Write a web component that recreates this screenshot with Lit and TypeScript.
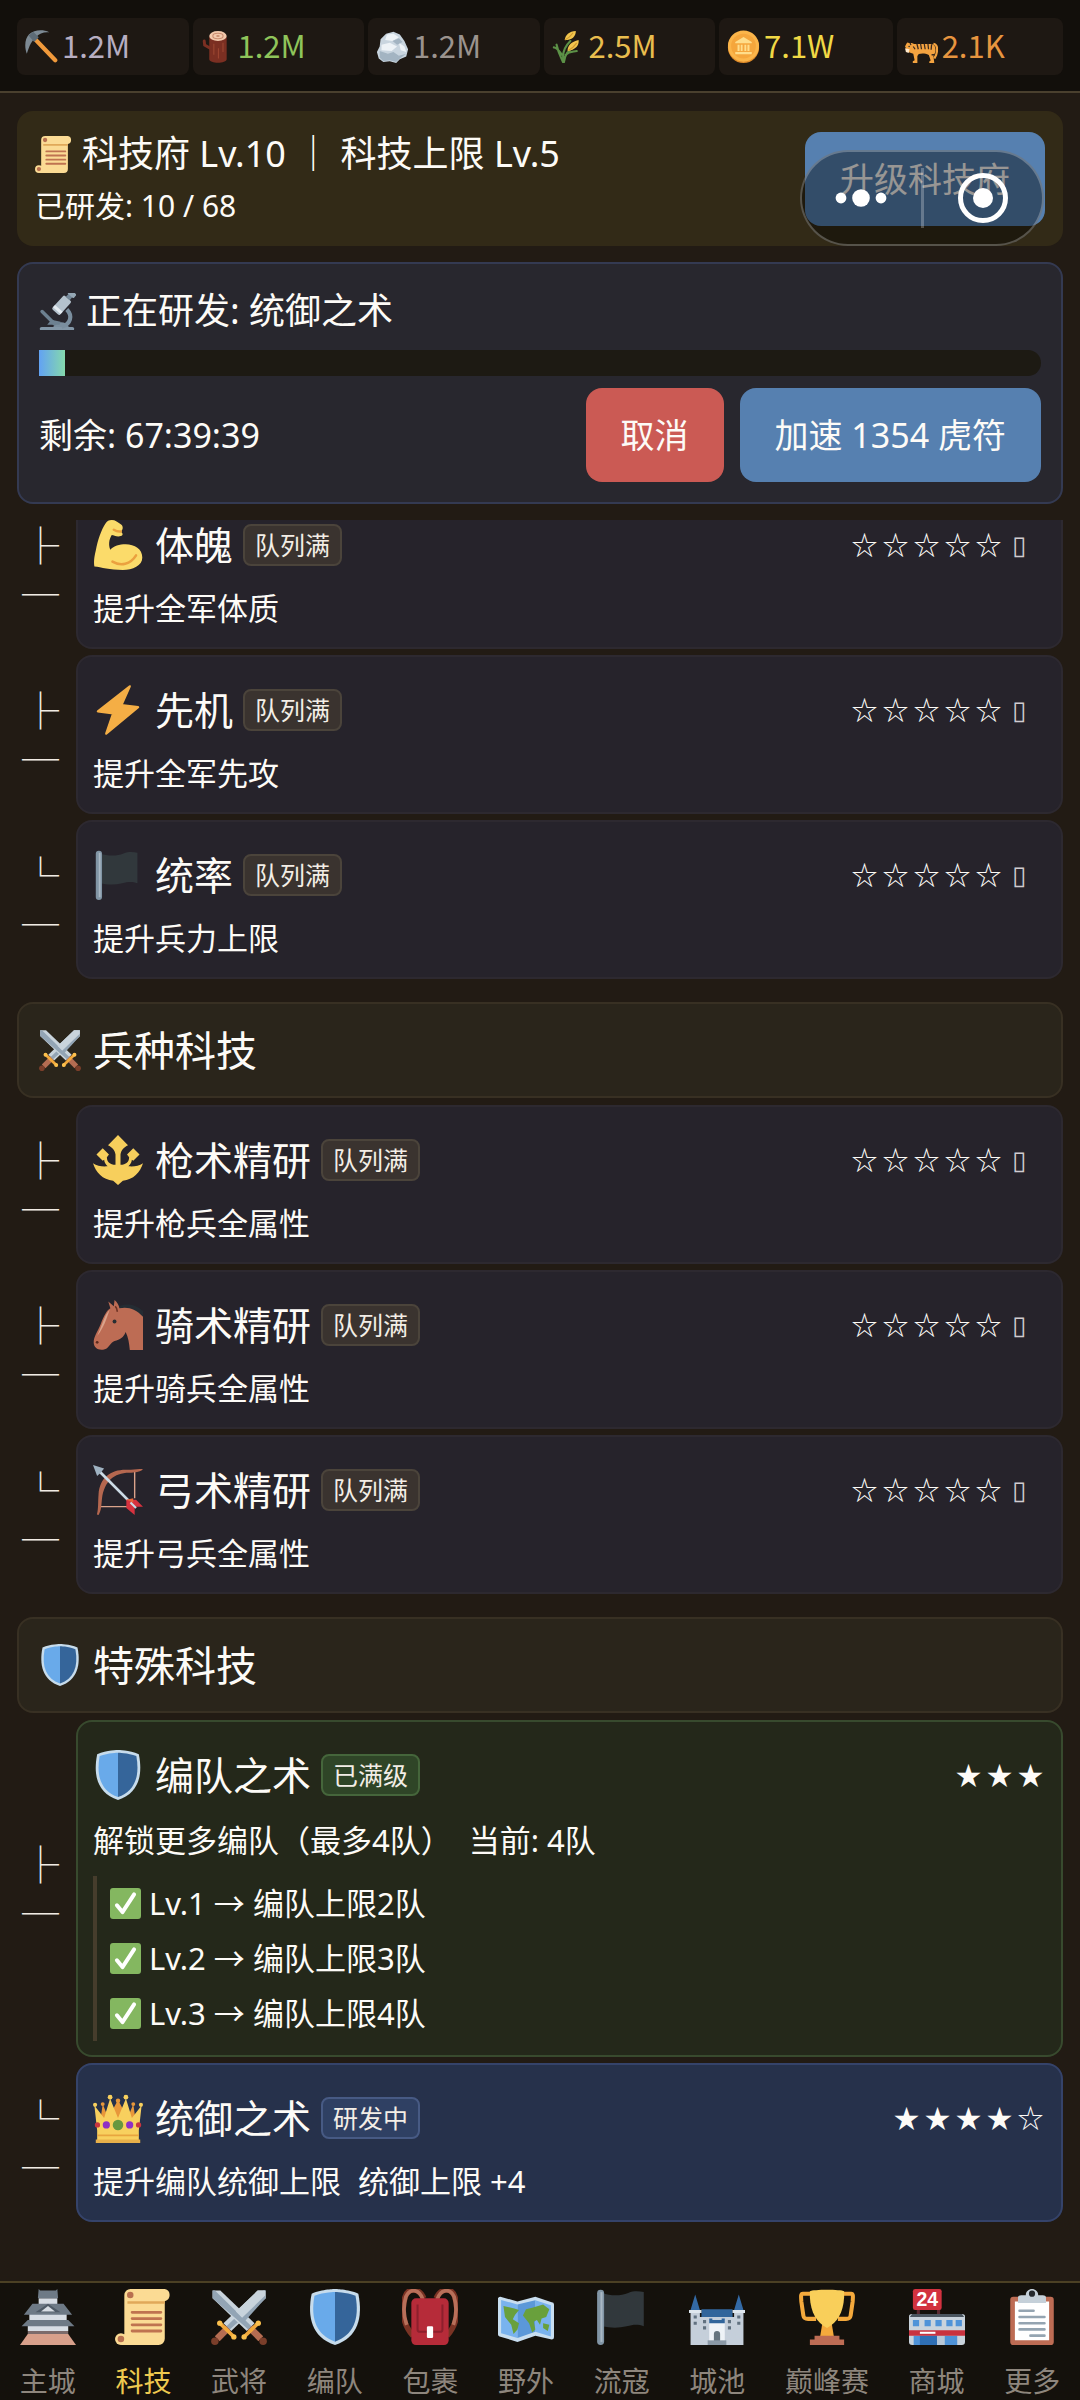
import { LitElement, html, svg, css, nothing } from "lit";
import type { SVGTemplateResult } from "lit";
import { customElement, query, state } from "lit/decorators.js";
import { classMap } from "lit/directives/class-map.js";

/* Icon drawings, each on a 36 by 36 grid. */
const sword = svg`
  <path d="M1 1h5L28 22l-5 5L1 6z" fill="#c9d4dc"/>
  <path d="M1 1h1.500L26 24l-2 2L1 6z" fill="#93a5b5"/>
  <path d="M25 25l7 7" stroke="#b56d52" stroke-width="4.400"/>
  <circle cx="33.500" cy="33.600" r="2.400" fill="#7a3e2a"/>
  <path d="M21 31L30.500 21.800" stroke="#f2a93c" stroke-width="2.400" stroke-linecap="round"/>
  <circle cx="21.300" cy="30.800" r="1.700" fill="#fbc04d"/>
  <circle cx="30.400" cy="22" r="1.700" fill="#fbc04d"/>`;

const icons: Record<string, SVGTemplateResult> = {
  pick: svg`
    <path d="M9 8l24 25" stroke="#f0993b" stroke-width="4.600" stroke-linecap="round"/>
    <path d="M4.500 4.500C10 0 19 -1 26.500 2.500c-6-.5-11 1-14.500 5.500-5 4-7 9-10 18C-1 18 0 9 4.500 4.500z" fill="#7d8a94"/>
    <path d="M4 6l5-4 6 6-5 5z" fill="#5d6b76"/>`,
  wood: svg`
    <path d="M9 7v25c0 5 19 5 19 0V7z" fill="#7b2f22"/>
    <path d="M10 20L4 16.500l-.5-4.500" stroke="#7b2f22" stroke-width="3.200" fill="none" stroke-linecap="round"/>
    <path d="M14 15v12M19 20v11M24 14v10" stroke="#9c4631" stroke-width="1.200"/>
    <ellipse cx="18.500" cy="6.500" rx="9.500" ry="5.500" fill="#f2c9ac"/>
    <ellipse cx="18.500" cy="6.500" rx="5.600" ry="3" fill="none" stroke="#c98d70" stroke-width="1.200"/>
    <ellipse cx="18.500" cy="6.500" rx="2" ry="1" fill="#c98d70"/>`,
  rock: svg`
    <path d="M11 4l8-2 7 3 5 7 4 9-2 8-7 3-4 4-7-2-7 1-5-4-2-7 3-6 1-8z" fill="#c9d5df"/>
    <path d="M12 5l7-1 6 4-7 4-8-1zM6 16l9-2 8 4-6 5-11-1zM25 14l6 4 2 6-6-2z" fill="#eef3f7"/>
    <path d="M4 23l9 3 6-2 6 4 8-2-7 5-4 4-7-2-7 1-4-4zM18 12l7-3 4 4-6 3z" fill="#a3b4c2"/>`,
  rice: svg`
    <path d="M13 35C11 28 12 20 20 12M13 35C14 27 17 22 26 17M12 35C9 28 7 25 5 16M11 27C7 22 5 19 2 19M15 27c4-4 8-3 12-4" fill="none" stroke="#5c9147" stroke-width="2.300" stroke-linecap="round"/>
    <path d="M14 11C14 6 19 1 26 1c0 6-4 10-12 10zM17 23c0-6 4-10 12-12 1 6-4 11-12 12z" fill="#f2c54d"/>
    <path d="M14 11c4-2 7-5 9-8M18 22c4-2 7-5 9-8" stroke="#cf9a2f" fill="none" stroke-width="1.300"/>`,
  coin: svg`
    <circle cx="18" cy="19" r="17" fill="#e08c2a"/>
    <circle cx="18" cy="17.500" r="17" fill="#fbb54a"/>
    <circle cx="18" cy="17.500" r="13.500" fill="#f5a63c"/>
    <path d="M18 7.500L27 13v1.500H9V13zM11.500 16h2.200v7h-2.200zM15 16h2v7h-2zM19 16h2v7h-2zM22.300 16h2.200v7h-2.200zM9 24h18v2.500H9z" fill="#ffdd8a"/>`,
  tiger: svg`
    <path d="M31 15c5 1 4.500 7 3 12l-2 4" fill="none" stroke="#f4a340" stroke-width="2.400"/>
    <path d="M0 18l1.500-3 1-1.500 2 .8h3l2.500 1h18c4.500 0 6 4 5 9l-2 4 1 8h-5.500v-2l1.500-1-2-6c-4-2-8-2-11-1l-1.500 2V36H8.500v-2l2-1-1.500-7-5.500-2z" fill="#f4a340"/>
    <path d="M0 20l5 1-1 4-3-1z" fill="#ffe8c9"/>
    <path d="M13 15l1.500 6M17 15l1 6M21 15l1 6M25 15l.7 6M29 15.500l-.5 6M5.500 14l1 2.500M9 18l2 3M29 27h3" stroke="#3a2a20" stroke-width="1.400"/>
    <circle cx="4.500" cy="18" r="0.900" fill="#292f33"/>`,
  scroll: svg`
    <path d="M10 0h22a4 4 0 0 1 0 7.800v24.200a4 4 0 0 1-4 4H4V32l2-3V4a4 4 0 0 1 4-4z" fill="#fbdb94"/>
    <path d="M8 7.800h24v1.700H8z" fill="#e0a95a"/>
    <circle cx="9.800" cy="3.900" r="2.100" fill="#b8704f"/>
    <circle cx="3.800" cy="32.200" r="3.800" fill="#fbdb94"/>
    <circle cx="3.800" cy="32.200" r="2.100" fill="#b8704f"/>
    <path d="M11 15h18.500M11 19h18.500M11 23h18.500M11 27h18.500" stroke="#bf7350" stroke-width="1.800" stroke-linecap="round"/>`,
  scope: svg`
    <path d="M3 33h29a2 2 0 0 1 2 3H1a2 2 0 0 1 2-3z" fill="#8296a6"/>
    <path d="M27 16c6 6 4 14-5 17" fill="none" stroke="#7a8e9e" stroke-width="4"/>
    <path d="M14 33c1-5 12-7 15 0z" fill="#7a8e9e"/>
    <path d="M3 18l12 12" stroke="#6d8191" stroke-width="3.400" stroke-linecap="round"/>
    <path d="M12 26l9 2-1 3H8z" fill="#6d8191"/>
    <g transform="rotate(42 22 12)">
      <rect x="17" y="3" width="10" height="18" rx="1.500" fill="#b4c2cd"/>
      <path d="M17 16h10v3H17z" fill="#e4ebf0"/>
      <rect x="19.500" y="-1" width="5" height="4" fill="#75899a"/>
      <rect x="18" y="-5.500" width="8" height="5" rx="1.500" fill="#94a7b5"/>
    </g>`,
  biceps: svg`
    <path d="M13.500 0C16 0 18 1.500 20.500 3.500c1.500 1.500 1 4-.5 4.800 1.500 1.200 2 2.700 0 3.300-3 .7-5-.7-6.500-.8C11.500 14 11 18 12.500 21.500 15 18.500 19 17.500 23.500 17.500 30 17.500 35.500 21 35.500 27c0 6-7 9-14 9C12 36 6 34 1 33.500.5 30 .8 27 2 22 3.500 14 6 7 9 2.500 10 .8 11.500 0 13.500 0z" fill="#fbdb6a"/>
    <path d="M14 30c6 3.500 13 2 17-4.500M15 7c1.500 1 3.500 1.500 5 1.300" fill="none" stroke="#eba13f" stroke-width="1.800" stroke-linecap="round"/>`,
  zap: svg`<path d="M26.500 1L3.500 19l11 1.500L9.500 35 32.500 16 20.500 14.500z" fill="#f4ae45" stroke="#f4ae45" stroke-width="1.600" stroke-linejoin="round"/>`,
  flag: svg`
    <path d="M5 2.500c6 2 12 2 17 0 4-1.500 7-1 10-.5v22c-4-1.500-7-1-11 0-5 1.200-10 1.200-16 0z" fill="#31383c"/>
    <rect x="2" y="0.500" width="4.500" height="35.500" rx="2.200" fill="#8195a5"/>
    <path d="M4.800 2v32" stroke="#a9b8c4" stroke-width="1.300"/>`,
  swords: svg`<g transform="matrix(-1 0 0 1 36 0)">${sword}</g><g>${sword}</g><path d="M35 1h-5L16 14.500l5 5L35 6z" fill="#c9d4dc"/><path d="M35 4L18.500 20l2.500 1.500L35 6z" fill="#93a5b5"/>`,
  trident: svg`
    <path d="M18 0l7.200 7.300c-3 1.600-5 3.500-5.400 6.700v7.500c4-.3 6.200-2 6.200-5.500l-1.500-2L29 9.500l4.500 4.500-4.500 4.500-1-.6c-.3 2-1 3.300-2.500 4.600 4 .4 7.500-.3 10.500-2.200C34 27 29 32 21.500 33L18 36l-3.500-3C7 32 2 27 0 20.300c3 1.900 6.500 2.600 10.500 2.200C9 21.200 8.300 19.900 8 17.900l-1 .6L2.500 14 7 9.500l4.500 4.500-1.500 2c0 3.500 2.200 5.200 6.200 5.500V14c-.4-3.200-2.400-5.100-5.400-6.700z" fill="#f7cf5c"/>`,
  horse: svg`
    <path d="M18 5c3-2.500 12-3 18 3v8H24z" fill="#252c33"/>
    <path d="M11 1l4 3.500L15.500 0c2 1.500 3 3.500 3.500 6 6-1.500 12 .5 17 6v24h-9.500c-.5-5-1-9-3-13-1.500 4-4 5.500-8 6.500-3 1-4 5-7 6-4 1.200-8-.5-8-5 0-4 3-8 5-13C8 11 10 7.500 12.500 6z" fill="#bd6c54"/>
    <path d="M12 7C9 10 8 14 5.500 20L3 26c3-4 5-8 6.500-12z" fill="#dba38b"/>
    <path d="M16 4.500c1 1 1.500 2.500 1.500 4" stroke="#6b3022" stroke-width="1.200" fill="none"/>
    <circle cx="15.500" cy="15.500" r="1.400" fill="#292f33"/><circle cx="3" cy="30.500" r="1" fill="#5c2a1e"/>`,
  bow: svg`
    <path d="M30 4v20M4 30h22" stroke="#dba38b" stroke-width="1"/>
    <path d="M36 3c-2 2-6 2.500-10 2.500C15 5.500 8 12 6.500 24c-.5 5-.5 9-2.500 12l-1.200-.3C4 31 3.500 27 4 21 5 9 13 3 25 3.500 29 3.500 32 2.500 36 3z" fill="#b5674f"/>
    <path d="M4 4l24 24" stroke="#ccdbe6" stroke-width="2"/>
    <path d="M0 0l8 2.500-2.500 3L3 8z" fill="#9fb2c2"/>
    <path d="M24 25l7 0 5 5h-6v6l-6-5z" fill="#d7323f"/>
    <path d="M24 25l5-1v3z" fill="#e8663a"/><path d="M27 27l4 4" stroke="#ccdbe6" stroke-width="1.500"/>`,
  shield: svg`
    <path d="M33 3c-7-3-15-3-15-3S10 0 3 3C0 18 3 31 18 36c15-5 18-18 15-33z" fill="#c7dcec"/>
    <path d="M18 33.900C6.400 29.700 2 19.800 4.800 4.400 11 2 18 2 18 2z" fill="#69aaea"/>
    <path d="M18 33.900C29.600 29.700 34 19.800 31.200 4.400 25 2 18 2 18 2z" fill="#35659a"/>`,
  check: svg`
    <rect width="36" height="36" rx="3.500" fill="#84b760"/>
    <path d="M8 20l6.500 8L28 7.500" fill="none" stroke="#fff" stroke-width="4.600" stroke-linecap="round" stroke-linejoin="round"/>`,
  crown: svg`
    <path d="M5 22L7 8l4 10 7-13 7 13 4-10 2 14z" fill="#e8973a"/>
    <path d="M3 35V27L1 9l7 9 4.300-14L18 18l5.700-14L28 18l7-9-2 18v8z" fill="#f8d05e"/>
    <path d="M3 30.500h30" stroke="#e8a53f" stroke-width="1.300"/>
    <path d="M2 33.500h32V36H2z" fill="#e8b04a"/>
    <circle cx="12.300" cy="3" r="1.700" fill="#f8d05e"/><circle cx="23.700" cy="3" r="1.700" fill="#f8d05e"/>
    <circle cx="1.500" cy="8.500" r="1.500" fill="#f8d05e"/><circle cx="34.500" cy="8.500" r="1.500" fill="#f8d05e"/>
    <circle cx="18" cy="5.500" r="1.600" fill="#e8973a"/><circle cx="7" cy="8" r="1.400" fill="#e8973a"/><circle cx="29" cy="8" r="1.400" fill="#e8973a"/>
    <circle cx="18" cy="23" r="3.800" fill="#67973f"/><circle cx="9.600" cy="23" r="2.600" fill="#8f2fc4"/><circle cx="26.400" cy="23" r="2.600" fill="#8f2fc4"/>
    <circle cx="3.200" cy="23" r="1.900" fill="#c9363f"/><circle cx="32.800" cy="23" r="1.900" fill="#c9363f"/>`,
  keep: svg`
    <path d="M5 29h26l5 7H0z" fill="#d8a08b"/><path d="M5 27h26v2H5z" fill="#7c6b6b"/>
    <path d="M6 16h24v4H6zM5 23.500h26V27H5zM12 6h12v5H12z" fill="#d7dde4"/>
    <path d="M12 0l1 1h10l1-1 .5 6h-13zM8 9.500h20l5.500 7H2.500zM5 20h26l4 4H1z" fill="#6e7a86"/>
    <path d="M18 9.500l8 5.500H10z" fill="#4f5b67"/><path d="M18 11l4.500 3.500h-9z" fill="#d7dde4"/>`,
  bag: svg`
    <path d="M14 6C11-1 4-1 2 5-.5 14 0 22 7 30M22 6c3-7 10-7 12-1 2.500 9 2 17-5 25" fill="none" stroke="#7a3324" stroke-width="3.600"/>
    <path d="M13.500 7C11-.5 5-.5 2.500 5 1 10 .5 16 3 23M22.500 7c2.500-7.500 8.500-7.500 11-2 1.500 5 2 11-.5 18" fill="none" stroke="#b8705a" stroke-width="2.400"/>
    <path d="M9 6h18a3 3 0 0 1 3 3v24a3 3 0 0 1-3 3H9a3 3 0 0 1-3-3V9a3 3 0 0 1 3-3z" fill="#b62b39"/>
    <path d="M10 10v16a1.500 1.500 0 0 0 1.500 1.500h13A1.500 1.500 0 0 0 26 26V10" fill="none" stroke="#8d1f2d" stroke-width="1.300"/>
    <rect x="16" y="24" width="4" height="7.500" rx="0.800" fill="#fff"/>`,
  map: svg`
    <path d="M1.500 5L12.500 8 24 5l10.500 3.500a1.500 1.500 0 0 1 1.500 1.500v21a1.500 1.500 0 0 1-1.500 1.500L24 30l-11.500 4L1 30.500A1.500 1.500 0 0 1 0 29V6a1.500 1.500 0 0 1 1.500-1z" fill="#c8def0"/>
    <path d="M2 7l10.500 3v21.500L2 28.500zM24 7.200L34 10.500v20L24 27.500z" fill="#79b3ef"/>
    <path d="M12.500 10L24 7.200v20.300l-11.500 4z" fill="#5b98d9"/>
    <path d="M3.500 11l7 1.500 3 1-2.500 3-1.500 3 4 2.500-1 4-2.500 3-1.500-6-4-5zM16 17l2-4 4-1 7-2 4 3-2 5-3 1-1 4-2-3-2 1 1 5-2 2-2-6zM29 22l4 1-1 4-3-2z" fill="#69a03c"/>`,
  castle: svg`
    <path d="M8 13h20v6H8z" fill="#31659b"/>
    <path d="M1 14h6v22H1zM29 14h6v22h-6zM7 18h22v18H7z" fill="#c5cfda"/>
    <path d="M0 13.500h8v2H0zM28 13.500h8v2h-8z" fill="#dfe7ee"/>
    <path d="M4 3.500l3 10H1zM32 3.500l3 10h-6z" fill="#336aa6"/>
    <path d="M13 20h10v14H13z" fill="#eef3f7"/><path d="M13 19h2v1h6v-1h2v3H13z" fill="#31659b"/>
    <path d="M16 34v-5a2 2 0 0 1 4 0v5z" fill="#66757f"/><path d="M12 33h12v3H12z" fill="#8b99a6"/>
    <path d="M3 17h2v2H3zM3 21h2v2H3zM31 17h2v2h-2zM31 21h2v2h-2zM9 20h2v2H9zM9 24h2v2H9zM25 20h2v2h-2zM25 24h2v2h-2z" fill="#617180"/>`,
  cup: svg`
    <path d="M8 3H2.500C1 3 1.300 5 1.500 8l1.300 9c.3 2 1.200 2.200 3 2.200H11M28 3h5.500c1.500 0 1.200 2 1 5l-1.300 9c-.3 2-1.200 2.200-3 2.200H25" fill="none" stroke="#f4a93c" stroke-width="2.600"/>
    <path d="M15 22h6l1.500 9h-9z" fill="#f4a93c"/>
    <path d="M7 1.500C9 .2 27 .2 29 1.500 29.500 12 26 20 20.500 23.500L18 25l-2.500-1.500C10 20 6.500 12 7 1.500z" fill="#f9cf5a"/>
    <path d="M10 30h16v2.500h3V36H7v-3.500h3z" fill="#bd6c54"/>`,
  shop: svg`
    <path d="M6 12v5M19 12v5" stroke="#5b2a32" stroke-width="2"/>
    <rect x="2.500" y="0" width="18.500" height="13.500" rx="1.500" fill="#d2323f"/>
    <path d="M0 17.500C0 16.500 1 16 2 16h32c1 0 2 .5 2 1.500V34c0 1-.7 2-2 2H2c-1.300 0-2-1-2-2z" fill="#c9d3dc"/>
    <path d="M2 16h32l1.500 2H.5z" fill="#4a555f"/>
    <path d="M2.500 20h4v4h-4zM10 20h4v4h-4zM17 20h4v4h-4zM24 20h4v4h-4zM30 20h4v4h-4zM3 30h28v6H3z" fill="#4f93d8"/>
    <path d="M7 30h11v6H7z" fill="#2f6fb5"/><path d="M18 30h5v6h-5z" fill="#b8c8d8"/>
    <path d="M0 26.500h36v3.500H0z" fill="#c9323f"/><path d="M7 27.500h10v1.300H7z" fill="#fff"/>
    <text x="11.800" y="11.200" text-anchor="middle" font-family="Liberation Sans, sans-serif" font-weight="700" font-size="12.500" fill="#fff">24</text>`,
  board: svg`
    <rect x="4" y="5" width="28" height="31" rx="2" fill="#bd6c54"/>
    <path d="M7 8h22v25H7z" fill="#fff"/>
    <path d="M9 9V5.500C9 4.500 10 4 11 4h3c0-2.500 2-4 4-4s4 1.500 4 4h3c1 0 2 .5 2 1.500V9z" fill="#c5d0d9"/>
    <circle cx="18" cy="3" r="2" fill="#25292d"/>
    <path d="M10 14h9M10 18h16M10 22h16M10 26h16M17 30h9" stroke="#94a4b1" stroke-width="1.700" stroke-linecap="round"/>`,
};

interface Tech {
  icon: string;
  name: string;
  desc: string;
  effect?: string;
  badge: string;
  kind: "wait" | "done" | "busy";
  stars: string;
  more?: boolean;
  levels?: string[];
}

interface Group {
  icon?: string;
  title?: string;
  techs: Tech[];
}

const queued = (icon: string, name: string, desc: string): Tech => ({
  icon, name, desc, badge: "队列满", kind: "wait", stars: "☆☆☆☆☆", more: true,
});

const groups: Group[] = [
  {
    techs: [
      queued("biceps", "体魄", "提升全军体质"),
      queued("zap", "先机", "提升全军先攻"),
      queued("flag", "统率", "提升兵力上限"),
    ],
  },
  {
    icon: "swords",
    title: "兵种科技",
    techs: [
      queued("trident", "枪术精研", "提升枪兵全属性"),
      queued("horse", "骑术精研", "提升骑兵全属性"),
      queued("bow", "弓术精研", "提升弓兵全属性"),
    ],
  },
  {
    icon: "shield",
    title: "特殊科技",
    techs: [
      {
        icon: "shield", name: "编队之术", desc: "解锁更多编队（最多4队）", effect: "当前: 4队",
        badge: "已满级", kind: "done", stars: "★★★",
        levels: ["Lv.1 → 编队上限2队", "Lv.2 → 编队上限3队", "Lv.3 → 编队上限4队"],
      },
      {
        icon: "crown", name: "统御之术", desc: "提升编队统御上限", effect: "统御上限 +4",
        badge: "研发中", kind: "busy", stars: "★★★★☆",
      },
    ],
  },
];

const resources = [
  ["pick", "1.2M", "iron"],
  ["wood", "1.2M", "wood"],
  ["rock", "1.2M", "stone"],
  ["rice", "2.5M", "grain"],
  ["coin", "7.1W", "gold"],
  ["tiger", "2.1K", "token"],
];

const tabs = [
  ["keep", "主城"], ["scroll", "科技"], ["swords", "武将"], ["shield", "编队"],
  ["bag", "包裹"], ["map", "野外"], ["flag", "流寇"], ["castle", "城池"],
  ["cup", "巅峰赛"], ["shop", "商城"], ["board", "更多"],
];

@customElement("app-root")
export class AppRoot extends LitElement {
  @state() private tab = "科技";
  @query(".list") private list!: HTMLElement;

  static styles = css`
    :host {
      display: flex;
      flex-direction: column;
      height: 100vh;
      overflow: hidden;
      background: #221b14;
      color: #fdfbf7;
      font-family: "Noto Sans", "Noto Sans CJK SC", sans-serif;
      font-size: 31px;
      line-height: 50px;
    }
    * { box-sizing: border-box; }
    h1, h2, h3, p, ul { margin: 0; padding: 0; font-weight: 400; }
    ul { list-style: none; }
    button { font: inherit; color: inherit; border: 0; cursor: pointer; }
    svg { display: block; flex: none; }
    .i32 { width: 33px; height: 33px; }
    .i36 { width: 37px; height: 37px; }
    .i31 { width: 31px; height: 31px; }
    .i42 { width: 42px; height: 42px; }
    .i50 { width: 50px; height: 50px; }
    .i56 { width: 56px; height: 56px; }

    .resources {
      display: flex;
      gap: 4px;
      padding: 18px 17px 16px;
      background: #120f0b;
      border-bottom: 2px solid #4a402e;
    }
    .resource {
      flex: 1 1 auto;
      display: flex;
      align-items: center;
      gap: 4px;
      height: 57px;
      padding: 0 8px;
      border-radius: 8px;
      background: #1e1813;
      font-family: "Noto Sans CJK SC", sans-serif;
      font-size: 31px;
    }
    .amount { padding-bottom: 4px; }
    .iron { color: #b7aec2; }
    .wood { color: #8fc45a; }
    .stone { color: #9b938e; }
    .grain { color: #e9bd4e; }
    .gold { color: #f0d845; }
    .token { color: #e7953f; }

    .top { display: flex; flex-direction: column; gap: 16px; padding: 18px 17px 16px; }
    .office {
      position: relative;
      display: flex;
      align-items: center;
      justify-content: space-between;
      padding: 16px 18px;
      border-radius: 16px;
      background: #322a17;
    }
    .title { display: flex; align-items: center; gap: 10px; font-size: 36px; line-height: 54px; }
    .sub { font-size: 30px; line-height: 49px; }
    .btn {
      height: 94px;
      padding: 0 35px;
      border-radius: 16px;
      background: #5680b0;
      font-size: 34px;
    }
    .btn.danger { background: #cb5a54; }

    /* Host app's capsule menu, floating above the page */
    .capsule {
      position: absolute;
      top: 39px;
      right: 19px;
      display: flex;
      align-items: center;
      width: 244px;
      height: 96px;
      border: 2px solid rgba(255, 255, 255, 0.25);
      border-radius: 48px;
      background: rgba(0, 0, 0, 0.4);
    }
    .capsule button {
      flex: 1;
      display: flex;
      justify-content: center;
      align-items: center;
      height: 100%;
      padding: 0;
      background: none;
    }
    .capsule .rule { width: 3px; height: 60px; background: rgba(255, 255, 255, 0.25); }

    .current {
      display: flex;
      flex-direction: column;
      gap: 12px;
      padding: 20px;
      border: 2px solid #343a52;
      border-radius: 16px;
      background: #28272e;
    }
    .bar { height: 26px; border-radius: 13px; background: #1d1a13; }
    .fill { height: 100%; background: linear-gradient(90deg, #62a2f3, #85d9ac); }
    .actions { display: flex; align-items: center; gap: 16px; font-size: 34px; }
    .left { flex: 1; }

    .list { flex: 1; min-height: 0; overflow-y: auto; scrollbar-width: none; padding: 0 17px 64px; }
    .list::-webkit-scrollbar { display: none; }
    .group + .group { margin-top: 23px; }
    .heading {
      display: flex;
      align-items: center;
      gap: 12px;
      height: 96px;
      margin-bottom: 7px;
      padding: 0 20px;
      border: 2px solid #383023;
      border-radius: 16px;
      background: #2a251b;
      font-size: 41px;
    }
    .techs { display: flex; flex-direction: column; gap: 6px; }
    .row { display: flex; align-items: center; }
    .branch {
      display: flex;
      flex-direction: column;
      width: 37px;
      margin: 0 17px 0 5px;
      font-size: 37px;
      font-weight: 500;
      line-height: 49px;
      color: #f1ebe4;
    }
    .card {
      flex: 1;
      min-width: 0;
      padding: 14px 15px;
      border: 2px solid #2d2930;
      border-radius: 16px;
      background: #26232b;
    }
    .card.done { background: #24281a; border-color: #384a2e; }
    .card.busy { background: #26314b; border-color: #35436a; }
    .head { display: flex; align-items: center; height: 77px; gap: 10px; }
    .name { font-size: 39px; margin-left: 2px; }
    .badge {
      padding: 0 10px;
      border: 2px solid #4b443b;
      border-radius: 8px;
      background: #3a332f;
      color: #f3eee6;
      font-size: 25px;
      line-height: 38px;
    }
    .done .badge { background: #2f4527; border-color: #45663b; }
    .busy .badge { background: #2f4063; border-color: #475a84; }
    .stars { display: flex; margin-left: auto; font-size: 26px; }
    .star { width: 31px; text-align: center; }
    .more { width: 42px; padding-left: 8px; font-family: "DejaVu Sans", sans-serif; color: #cfcbd0; }
    .desc { display: flex; gap: 17px; }
    .tall { line-height: 55px; }
    .levels { margin-top: 8px; padding-left: 13px; border-left: 4px solid #463d2c; line-height: 55px; }
    .level { display: flex; align-items: center; gap: 8px; }

    .tabs {
      display: flex;
      padding-top: 6px;
      background: #14110c;
      border-top: 2px solid #4b4024;
    }
    .tab {
      flex: 1 1 auto;
      display: flex;
      flex-direction: column;
      align-items: center;
      gap: 17px;
      color: #8e867d;
      font-size: 28px;
      line-height: 38px;
      text-decoration: none;
    }
    .tab.on { color: #eec94f; }
  `;

  firstUpdated() {
    // Opens partway down the first group.
    this.list.scrollTop = 30;
  }

  private icon(name: string, size: string) {
    return html`<svg class=${size} viewBox="0 0 36 36" fill="none" aria-hidden="true">${icons[name]}</svg>`;
  }

  private row(t: Tech, last: boolean) {
    return html`
      <li class="row">
        <div class="branch" aria-hidden="true"><span>${last ? "└" : "├"}</span><span>─</span></div>
        <article class="card ${t.kind}">
          <div class="head">
            ${this.icon(t.icon, "i50")}
            <h3 class="name">${t.name}</h3>
            <span class="badge">${t.badge}</span>
            <span class="stars">
              ${[...t.stars].map((s) => html`<span class="star">${s}</span>`)}
              ${t.more ? html`<span class="more">▯</span>` : nothing}
            </span>
          </div>
          <p class=${classMap({ desc: true, tall: !!t.levels })}>
            <span>${t.desc}</span>${t.effect ? html`<span>${t.effect}</span>` : nothing}
          </p>
          ${t.levels
            ? html`<ul class="levels">
                ${t.levels.map((l) => html`<li class="level">${this.icon("check", "i31")}<span>${l}</span></li>`)}
              </ul>`
            : nothing}
        </article>
      </li>`;
  }

  render() {
    return html`
      <header class="resources">
        ${resources.map(
          ([icon, amount, kind]) => html`<div class="resource ${kind}">${this.icon(icon, "i32")}<span class="amount">${amount}</span></div>`
        )}
      </header>

      <div class="top">
        <section class="office">
          <div>
            <h1 class="title">${this.icon("scroll", "i36")}<span>科技府 Lv.10 ｜ 科技上限 Lv.5</span></h1>
            <p class="sub">已研发: 10 / 68</p>
          </div>
          <button class="btn">升级科技府</button>
          <div class="capsule">
            <button aria-label="菜单">
              <svg width="52" height="20" viewBox="0 0 52 20" fill="#fff">
                <circle cx="6" cy="10" r="5.400"/><circle cx="26" cy="10" r="8.800"/><circle cx="46" cy="10" r="5.400"/>
              </svg>
            </button>
            <span class="rule"></span>
            <button aria-label="关闭">
              <svg width="50" height="50" viewBox="0 0 50 50">
                <circle cx="25" cy="25" r="22.500" fill="none" stroke="#fff" stroke-width="5"/>
                <circle cx="25" cy="25" r="10" fill="#fff"/>
              </svg>
            </button>
          </div>
        </section>

        <section class="current">
          <h2 class="title">${this.icon("scope", "i36")}<span>正在研发: 统御之术</span></h2>
          <div class="bar" role="progressbar" aria-label="研发进度" aria-valuenow="2.6">
            <div class="fill" style="width: 2.6%"></div>
          </div>
          <div class="actions">
            <span class="left">剩余: 67:39:39</span>
            <button class="btn danger">取消</button>
            <button class="btn">加速 1354 虎符</button>
          </div>
        </section>
      </div>

      <main class="list">
        ${groups.map(
          (g) => html`
            <section class="group">
              ${g.title ? html`<h2 class="heading">${this.icon(g.icon!, "i42")}<span>${g.title}</span></h2>` : nothing}
              <ul class="techs">
                ${g.techs.map((t, i) => this.row(t, i === g.techs.length - 1))}
              </ul>
            </section>`
        )}
      </main>

      <nav class="tabs">
        ${tabs.map(
          ([icon, label]) => html`
            <a
              class=${classMap({ tab: true, on: this.tab === label })}
              href="#${label}"
              @click=${() => (this.tab = label)}
              >${this.icon(icon, "i56")}<span>${label}</span></a
            >`
        )}
      </nav>
    `;
  }
}
